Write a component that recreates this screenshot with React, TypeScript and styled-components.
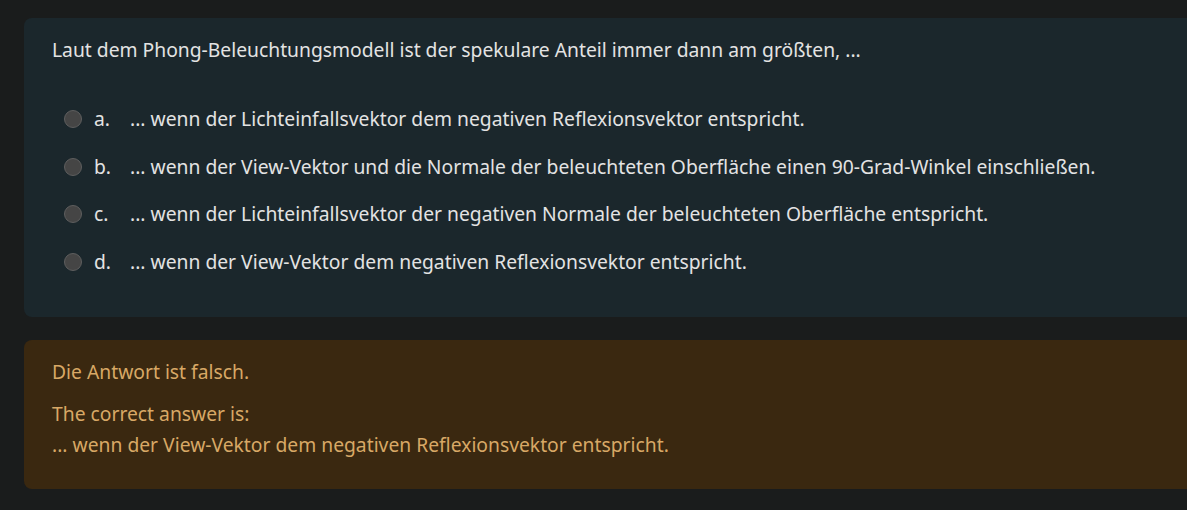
import React from 'react';
import styled, { createGlobalStyle } from 'styled-components';

const GlobalStyle = createGlobalStyle`
  html, body {
    margin: 0;
    padding: 0;
    background-color: #1a1c1c;
    overflow: hidden;
  }
  body {
    font-family: 'Noto Sans', 'Open Sans', sans-serif;
  }
`;

const Page = styled.main`
  display: flex;
  flex-direction: column;
  gap: 23px;
  padding: 18px 0 0 24px;
  width: 1187px;
  box-sizing: border-box;
`;

const Card = styled.section<{ $tone: 'question' | 'feedback' }>`
  background-color: ${(p) => (p.$tone === 'question' ? '#1b272c' : '#3a2810')};
  color: ${(p) => (p.$tone === 'question' ? '#e3e3e3' : '#d8a866')};
  border-radius: 8px 0 0 8px;
  margin-right: -20px;
  padding: ${(p) => (p.$tone === 'question' ? '19px 28px 42px' : '16px 28px 29px')};
  font-size: 19.3px;
`;

const Prompt = styled.p`
  line-height: 26px;
  margin: 0 0 43px;
`;

const Options = styled.div`
  display: flex;
  flex-direction: column;
  gap: 21.7px;
  padding-left: 12px;
`;

const Option = styled.label`
  display: flex;
  align-items: center;
  line-height: 26px;
`;

const Radio = styled.span`
  width: 16px;
  height: 16px;
  border-radius: 50%;
  background-color: #454545;
  border: 1px solid #5e5e5e;
  margin-right: 12px;
  flex-shrink: 0;
`;

const Letter = styled.span`
  width: 36px;
`;

const FeedbackLine = styled.div<{ $gap?: number }>`
  line-height: 31px;
  margin-bottom: ${(p) => p.$gap ?? 0}px;
`;

const options = [
  { letter: 'a.', text: '... wenn der Lichteinfallsvektor dem negativen Reflexionsvektor entspricht.' },
  { letter: 'b.', text: '... wenn der View-Vektor und die Normale der beleuchteten Oberfläche einen 90-Grad-Winkel einschließen.' },
  { letter: 'c.', text: '... wenn der Lichteinfallsvektor der negativen Normale der beleuchteten Oberfläche entspricht.' },
  { letter: 'd.', text: '... wenn der View-Vektor dem negativen Reflexionsvektor entspricht.' },
];

const App: React.FC = () => {
  return (
    <>
      <GlobalStyle />
      <Page>
        <Card $tone="question">
          <Prompt>Laut dem Phong-Beleuchtungsmodell ist der spekulare Anteil immer dann am größten, ...</Prompt>
          <Options>
            {options.map((o) => (
              <Option key={o.letter}>
                <Radio />
                <Letter>{o.letter}</Letter>
                <span>{o.text}</span>
              </Option>
            ))}
          </Options>
        </Card>
        <Card $tone="feedback">
          <FeedbackLine $gap={11}>Die Antwort ist falsch.</FeedbackLine>
          <FeedbackLine>The correct answer is:</FeedbackLine>
          <FeedbackLine>... wenn der View-Vektor dem negativen Reflexionsvektor entspricht.</FeedbackLine>
        </Card>
      </Page>
    </>
  );
};

export default App;
